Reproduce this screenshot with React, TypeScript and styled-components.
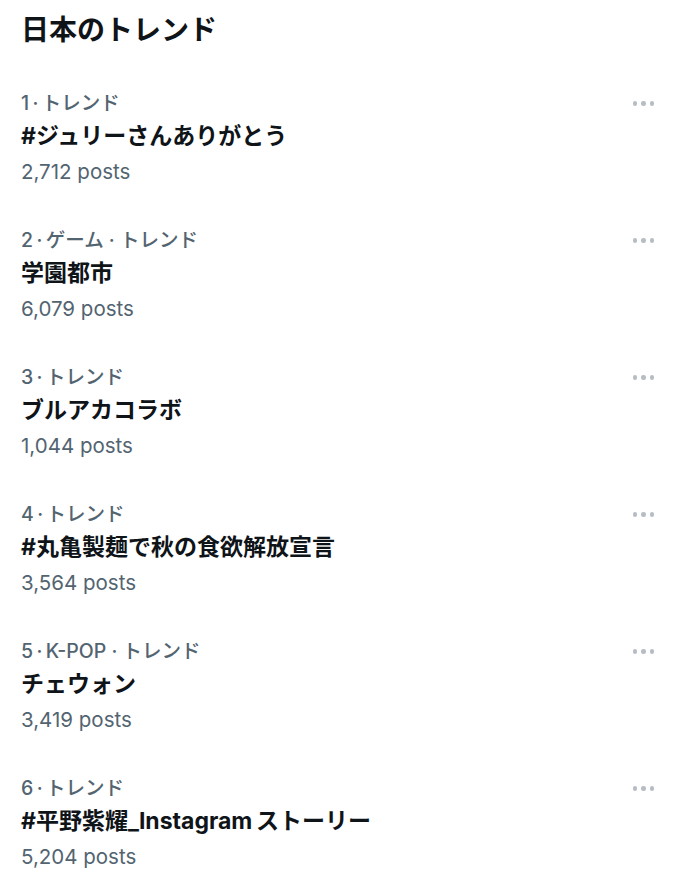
import React from "react";
import styled, { createGlobalStyle } from "styled-components";

const Global = createGlobalStyle`
  html, body { margin: 0; padding: 0; background: #ffffff; }
  body { font-family: Inter, "Noto Sans CJK JP", sans-serif; color: #0f1419; }
`;

const Page = styled.div`
  width: 680px;
  min-height: 894px;
  padding: 12px 21px 0 21px;
  box-sizing: border-box;
  display: flex;
  flex-direction: column;
`;

const Heading = styled.h1`
  margin: 0 0 42px 0;
  font-size: 28px;
  line-height: 36px;
  font-weight: 700;
  color: #0f1419;
`;

const List = styled.div`
  display: flex;
  flex-direction: column;
  gap: 37px;
`;

const Row = styled.div`
  display: flex;
  justify-content: space-between;
  align-items: flex-start;
`;

const Info = styled.div`
  display: flex;
  flex-direction: column;
`;

const Meta = styled.div`
  font-size: 19.5px;
  line-height: 26px;
  font-weight: 500;
  color: #536471;
`;

const Title = styled.div`
  margin-top: 2px;
  font-size: 23px;
  line-height: 36px;
  font-weight: 700;
  color: #0f1419;
`;

const Count = styled.div`
  font-size: 20.5px;
  line-height: 36px;
  color: #536471;
`;

const More = styled.div`
  display: flex;
  gap: 4px;
  padding: 11px 5px 0 0;
`;

const Dot = styled.span`
  width: 4.5px;
  height: 4.5px;
  border-radius: 50%;
  background: #b6bdc4;
`;

const trends = [
  { rank: 1, cat: "トレンド", title: "#ジュリーさんありがとう", posts: "2,712" },
  { rank: 2, cat: "ゲーム · トレンド", title: "学園都市", posts: "6,079" },
  { rank: 3, cat: "トレンド", title: "ブルアカコラボ", posts: "1,044" },
  { rank: 4, cat: "トレンド", title: "#丸亀製麺で秋の食欲解放宣言", posts: "3,564" },
  { rank: 5, cat: "K-POP · トレンド", title: "チェウォン", posts: "3,419" },
  { rank: 6, cat: "トレンド", title: "#平野紫耀_Instagram\u2009ストーリー", posts: "5,204" },
];

export default function App() {
  return (
    <>
      <Global />
      <Page>
        <Heading>日本のトレンド</Heading>
        <List>
          {trends.map((t) => (
            <Row key={t.rank}>
              <Info>
                <Meta>
                  {t.rank}
                  {"\u2009·\u2009"}
                  {t.cat}
                </Meta>
                <Title>{t.title}</Title>
                <Count>{t.posts} posts</Count>
              </Info>
              <More>
                <Dot />
                <Dot />
                <Dot />
              </More>
            </Row>
          ))}
        </List>
      </Page>
    </>
  );
}
